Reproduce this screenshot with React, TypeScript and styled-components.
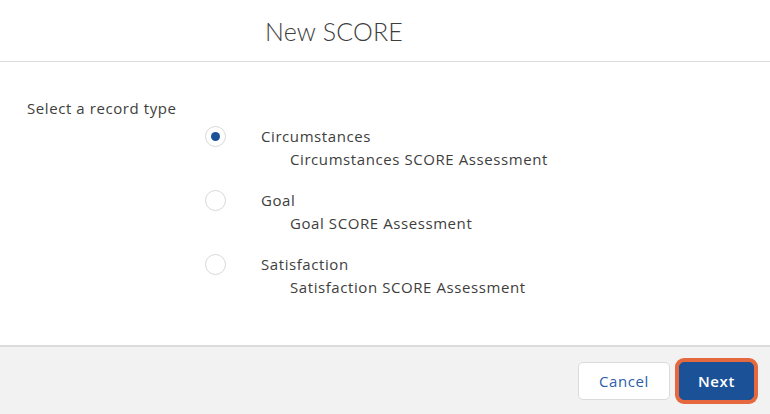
import styled, { createGlobalStyle } from "styled-components"

const GlobalStyle = createGlobalStyle`
    html, body {
        margin: 0;
        padding: 0;
        background: #ffffff;
    }
    body {
        font-family: "Open Sans", Lato, sans-serif;
        color: #3e3e3c;
    }
`

const Modal = styled.div`
    width: 770px;
    height: 414px;
    display: flex;
    flex-direction: column;
    background: #fff;
    overflow: hidden;
`

const Header = styled.header`
    height: 62px;
    flex: none;
    display: flex;
    align-items: center;
    padding-left: 265px;
    border-bottom: 1px solid #dddbda;
    box-sizing: border-box;
`

const Title = styled.h2`
    margin: 0;
    font-family: Lato, "Open Sans", sans-serif;
    font-size: 25px;
    font-weight: 300;
    color: #3e3e3c;
    letter-spacing: 0.2px;
`

const Body = styled.main`
    flex: 1;
    padding: 36px 0 0 27px;
`

const Text = styled.span`
    font-size: 15px;
    letter-spacing: 0.58px;
    line-height: 20px;
    color: #3e3e3c;
`

const Legend = styled(Text).attrs({ as: "div" })`
    margin-bottom: 8px;
`

const Options = styled.div`
    display: flex;
    flex-direction: column;
    gap: 21px;
    margin-left: 178px;
`

const Option = styled.label`
    display: grid;
    grid-template-columns: 56px auto;
    row-gap: 2px;
    cursor: pointer;
`

const Radio = styled.span<{ $checked?: boolean }>`
    width: 21px;
    height: 21px;
    border-radius: 50%;
    border: 1px solid #d8d8d8;
    box-sizing: border-box;
    display: flex;
    align-items: center;
    justify-content: center;
    align-self: center;
    &::after {
        content: "";
        width: 9px;
        height: 9px;
        border-radius: 50%;
        background: ${(p) => (p.$checked ? "#1b5297" : "transparent")};
    }
`

const OptionDesc = styled(Text)`
    grid-column: 2;
    padding-left: 29px;
`

const Footer = styled.footer`
    height: 69px;
    flex: none;
    background: #f3f2f2;
    border-top: 2px solid #dddbda;
    box-sizing: border-box;
    display: flex;
    align-items: center;
    justify-content: flex-end;
    gap: 9px;
    padding-right: 16px;
`

const Btn = styled.button<{ $primary?: boolean }>`
    height: 38px;
    padding: 0 ${(p) => (p.$primary ? "18px" : "20px")};
    border-radius: 5px;
    font-family: "Open Sans", Lato, sans-serif;
    font-size: 15px;
    letter-spacing: 0.6px;
    cursor: pointer;
    border: 1px solid ${(p) => (p.$primary ? "#1b5297" : "#dddbda")};
    background: ${(p) => (p.$primary ? "#1b5297" : "#fff")};
    color: ${(p) => (p.$primary ? "#fff" : "#2c5fa8")};
    font-weight: ${(p) => (p.$primary ? 600 : 400)};
    box-shadow: ${(p) => (p.$primary ? "0 0 0 4px #e5683f" : "none")};
`

const recordTypes = [
    { name: "Circumstances", desc: "Circumstances SCORE Assessment", checked: true },
    { name: "Goal", desc: "Goal SCORE Assessment" },
    { name: "Satisfaction", desc: "Satisfaction SCORE Assessment" },
]

export default function App() {
    return (
        <>
            <GlobalStyle />
            <Modal>
                <Header>
                    <Title>New SCORE</Title>
                </Header>
                <Body>
                    <Legend>Select a record type</Legend>
                    <Options>
                        {recordTypes.map((rt) => (
                            <Option key={rt.name}>
                                <Radio $checked={rt.checked} />
                                <Text>{rt.name}</Text>
                                <OptionDesc>{rt.desc}</OptionDesc>
                            </Option>
                        ))}
                    </Options>
                </Body>
                <Footer>
                    <Btn>Cancel</Btn>
                    <Btn $primary>Next</Btn>
                </Footer>
            </Modal>
        </>
    )
}
